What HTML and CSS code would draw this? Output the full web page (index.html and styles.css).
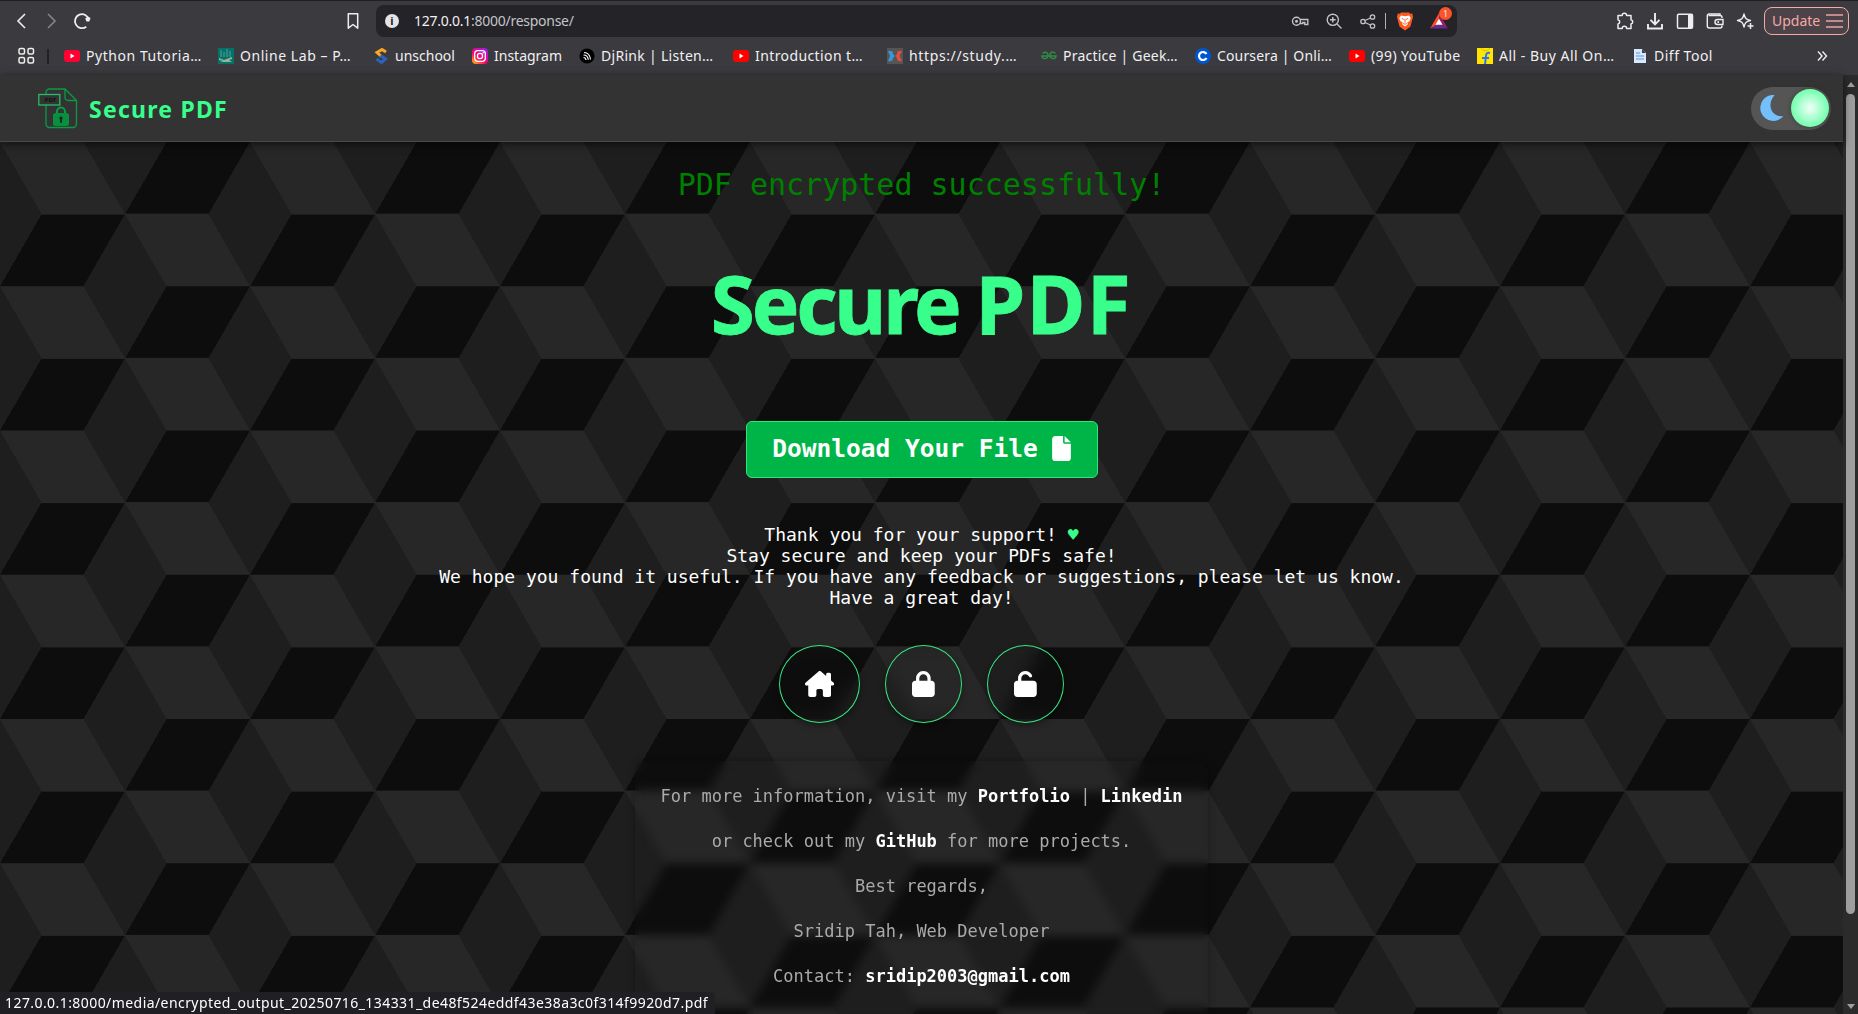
FILE: index.html
```html
<!DOCTYPE html>
<html lang="en">
<head>
<meta charset="utf-8">
<title>Secure PDF</title>
<link rel="stylesheet" href="styles.css">
</head>
<body>
<header class="chrome">
  <div class="toolbar">
    <div class="nav-icons">
      <svg width="46" height="20" viewBox="0 0 46 20"><g fill="none" stroke-width="1.6"><path d="M11 3 4 10 11 17" stroke="#eee"/><path d="M34 3 41 10 34 17" stroke="#858489"/></g></svg>
      <svg width="20" height="20" viewBox="0 0 20 20"><path d="M16.800 8.500A7 7 0 1 0 14.300 15.700" fill="none" stroke="#eee" stroke-width="1.800"/><path d="M13.200 7.500 16 5.500l2.500 1.500-1.200 3.500h-2.800z" fill="#eee"/></svg>
    </div>
    <svg class="bookmark" width="20" height="20" viewBox="0 0 20 20"><path d="M5.300 2.800h9.400v14.400L10 13.500l-4.700 3.700z" fill="none" stroke="#eee" stroke-width="1.500" stroke-linejoin="round"/></svg>
    <div class="address">
      <span class="info">i</span>
      <span class="url">127.0.0.1<span class="path">:8000/response/</span></span>
      <div class="address-icons">
        <svg width="18" height="18" viewBox="0 0 18 18"><g fill="none" stroke="#c4c3c8" stroke-width="1.400"><circle cx="5.500" cy="9.300" r="4"/><path d="M9 7.500h7.800v5h-3V10.500h-2v1H9"/></g><circle cx="5.500" cy="9.300" r="1.500" fill="#c4c3c8"/></svg>
        <svg width="18" height="18" viewBox="0 0 18 18"><g fill="none" stroke="#c4c3c8" stroke-width="1.400"><circle cx="7.800" cy="7.800" r="5.600"/><path d="m12 12 4.500 4.500M5 7.800h5.600M7.800 5v5.600"/></g></svg>
        <svg width="18" height="18" viewBox="0 0 18 18"><g fill="none" stroke="#c4c3c8" stroke-width="1.300"><circle cx="4" cy="9.500" r="2.200"/><circle cx="13.500" cy="5" r="2.200"/><circle cx="13.500" cy="14" r="2.200"/><path d="m6 8.500 5.500-2.500M6 10.500l5.500 2.500"/></g></svg>
        <span class="sep"></span>
        <svg width="18" height="20" viewBox="0 0 18 20"><path d="M5 1.500h8l1.300 1.300 2-.2.700 3.400-.7 2.500-1.800 7L9 19.500 3.500 15.500l-1.800-7L1 6l.700-3.400 2 .2z" fill="#fb5a1e"/><path d="M5 4.500 9 5.200l4-.7 1.800 2.500-1.300 3.300-2.300 1.200L12 13l-3 2.500L6 13l.8-1.500-2.300-1.200L3.200 7z" fill="#fff"/><path d="m5.800 7.500 2 .8M12.200 7.500l-2 .8M9 8v3.500M7.200 12.200 9 13.400l1.800-1.200" fill="none" stroke="#fb5a1e"/></svg>
        <div class="rewards"><svg width="18" height="16" viewBox="0 0 20 18"><path d="M10 0 0 17.500l10-6z" fill="#ff4a2a"/><path d="M10 0v11.500l10 6z" fill="#9e1f63"/><path d="M0 17.500h20l-10-6z" fill="#662d91"/><path d="m10 6.500-4 6.700h8z" fill="#fff"/></svg><span class="badge">1</span></div>
      </div>
    </div>
    <div class="actions">
      <svg width="18" height="20" viewBox="0 0 18 20"><path d="M2 4.500h4.200a2.200 2.200 0 0 1 4.400 0H15v4.200a2.200 2.200 0 0 1 0 4.300v4.500h-4.400a2.200 2.200 0 0 0-4.400 0H2V13a2.200 2.200 0 0 0 0-4.300z" fill="none" stroke="#eee" stroke-width="1.500" stroke-linejoin="round"/></svg>
      <svg width="18" height="20" viewBox="0 0 18 20"><path d="M9 2v11M4.500 8.800 9 13.300l4.500-4.500M2 13v4.500h14V13" fill="none" stroke="#eee" stroke-width="1.900"/></svg>
      <svg width="18" height="20" viewBox="0 0 18 20"><rect x="1.500" y="3.200" width="15" height="14" rx="1.200" fill="none" stroke="#eee" stroke-width="1.500"/><path d="M12 3.500h5v13.500h-5z" fill="#eee"/></svg>
      <svg width="18" height="20" viewBox="0 0 18 20"><g fill="none" stroke="#eee" stroke-width="1.400"><path d="M16 7V6.500a2 2 0 0 0-2-2H2.500"/><path d="M14 4.500V3H3a1.700 1.700 0 0 0-1.700 1.700V15a2 2 0 0 0 2 2H14a2 2 0 0 0 2-2v-.5"/><path d="M17 8.500h-5.500a2.500 2.500 0 0 0 0 5H17z"/></g><circle cx="12.200" cy="11" r="1" fill="#eee"/></svg>
      <svg width="18" height="20" viewBox="0 0 18 20"><path d="M8 3c1 4.500 2 5.500 6.500 6.500C10 10.500 9 11.500 8 16 7 11.500 6 10.500 1.500 9.500 6 8.500 7 7.500 8 3z" fill="none" stroke="#eee" stroke-width="1.400" stroke-linejoin="round"/><path d="M14.500 12v6M11.500 15h6" stroke="#eee" stroke-width="1.500"/></svg>
      <div class="update"><span>Update</span><svg width="17" height="16" viewBox="0 0 17 16"><path d="M0 2h17M0 8h17M0 14h17" stroke="#e9a3a3" stroke-width="1.500"/></svg></div>
    </div>
  </div>
  <nav class="bookmarks">
    <svg class="grid" width="17" height="18" viewBox="0 0 17 18"><g fill="none" stroke="#eee" stroke-width="1.500"><rect x="1" y="1.500" width="5.500" height="5.500" rx="1.500"/><rect x="10" y="1.500" width="5.500" height="5.500" rx="1.500"/><rect x="1" y="10.500" width="5.500" height="5.500" rx="1.500"/><rect x="10" y="10.500" width="5.500" height="5.500" rx="1.500"/></g></svg>
    <span class="divider"></span>
    <div class="links">
      <a class="w1"><svg viewBox="0 0 16 16"><rect y="2" width="16" height="12" rx="3" fill="#ff0033"/><path d="m6.500 5.500 4 2.500-4 2.500z" fill="#fff"/></svg><span>Python Tutoria…</span></a>
      <a class="w2"><svg viewBox="0 0 16 16"><path d="M0 0h16v16H0z" fill="#04716b"/><path d="M3 2v7M6 4v5M9 1v8M12 3v6" stroke="#5aa39a"/><path d="m1 10 5 2 8-3v2l-3 1 3 2H2l3-1-4-1z" fill="#9ab58f"/></svg><span>Online Lab – P…</span></a>
      <a class="w3"><svg viewBox="0 0 16 16"><path d="m13 4-4-2.500L4 4.500l4.500 4" fill="none" stroke="#f9a825" stroke-width="3"/><path d="m7.500 7.500 5 3.500-4 3.500-5-3.500" fill="none" stroke="#2a63b8" stroke-width="3"/></svg><span>unschool</span></a>
      <a class="w4"><svg viewBox="0 0 16 16"><defs><linearGradient id="ig" x1="0" y1="1" x2=".8" y2="0"><stop stop-color="#ffc800"/><stop offset=".45" stop-color="#ff0169"/><stop offset="1" stop-color="#9b1fe8"/></linearGradient></defs><rect width="16" height="16" rx="4" fill="url(#ig)"/><g fill="none" stroke="#fff" stroke-width="1.300"><rect x="2.700" y="2.700" width="10.600" height="10.600" rx="3"/><circle cx="8" cy="8" r="2.600"/></g><circle cx="11.200" cy="4.800" r=".8" fill="#fff"/></svg><span>Instagram</span></a>
      <a class="w5"><svg viewBox="0 0 16 16"><circle cx="8" cy="8" r="7.600" fill="#000"/><path d="M5 4.500c4 0 6 3 6.500 7M4.500 7c3 0 4.500 2 4.800 4.800M4.500 9.500c1.500 0 2.300 1 2.500 2.500" fill="none" stroke="#fff" stroke-width="1.200"/></svg><span>DjRink | Listen…</span></a>
      <a class="w6"><svg viewBox="0 0 16 16"><rect y="2" width="16" height="12" rx="3" fill="#f00"/><path d="m6.500 5.500 4 2.500-4 2.500z" fill="#fff"/></svg><span>Introduction t…</span></a>
      <a class="w7"><svg viewBox="0 0 16 16"><path d="M0 0h16v16H0z" fill="#555"/><path d="M1 3h3q2 0 2 3l2 2-2 2q0 4-5 3l2-5z" fill="#3498db"/><path d="M15 3h-3q-2 0-2 3L8.500 8l1.500 2q0 4 5 3l-2.500-5z" fill="#e74c3c"/></svg><span>https://study.…</span></a>
      <a class="w8"><svg viewBox="0 0 16 16"><g fill="none" stroke="#2f8d46" stroke-width="1.500"><path d="M1.500 5.500C5 3 7.500 5 7 8s-5.500 4-6 0h14c-.5 4-5.500 3-6 0s2-5.500 5.500-2.500"/></g></svg><span>Practice | Geek…</span></a>
      <a class="w9"><svg viewBox="0 0 16 16"><circle cx="8" cy="8" r="8" fill="#0056d2"/><path d="M11.500 10a4 4 0 1 1 0-4" fill="none" stroke="#fff" stroke-width="2.200"/></svg><span>Coursera | Onli…</span></a>
      <a class="w10"><svg viewBox="0 0 16 16"><rect y="2" width="16" height="12" rx="3" fill="#f00"/><path d="m6.500 5.500 4 2.500-4 2.500z" fill="#fff"/></svg><span>(99) YouTube</span></a>
      <a class="w11"><svg viewBox="0 0 16 16"><path d="M0 0h16v16H0z" fill="#ffe500"/><path d="M4 0q4 6 9 0" fill="none" stroke="#e3bd00"/><path d="M13 5q-4-1-4 3l-1 8M5 10h7" fill="none" stroke="#2874f0" stroke-width="2"/></svg><span>All - Buy All On…</span></a>
      <a class="w12"><svg viewBox="0 0 16 16"><path d="M2 1h8l4 4v10H2z" fill="#d7e8ff"/><path d="M10 1v4h4" fill="#345"/><path d="M4 5h4M4 8h8M4 11h8" stroke="#86aee0" stroke-width="1.300"/></svg><span>Diff Tool</span></a>
    </div>
    <svg class="more" width="12" height="12" viewBox="0 0 12 12"><path d="m2 1.500 4 4.500-4 4.500M6.500 1.500l4 4.500-4 4.500" fill="none" stroke="#eee" stroke-width="1.400"/></svg>
  </nav>
</header>
<div class="viewport">
  <div class="page">
    <div class="topbar">
      <div class="brand">
        <svg width="40" height="41" viewBox="0 0 40 41"><g fill="none" stroke="#0a9c45" stroke-width="1.300"><path d="M8 6V4.500a3.500 3.500 0 0 1 3.500-3.500H27l11.500 11.500V36a3.500 3.500 0 0 1-3.500 3.500H11.500A3.500 3.500 0 0 1 8 36V17"/><path d="M27 1v8.500a3 3 0 0 0 3 3h8.500"/><path d="M19 27v-3.500a4 4 0 0 1 8 0V27" stroke-width="2"/></g><rect x="15" y="25" width="16" height="13" rx="2.500" fill="#0a8f40"/><path d="M23 28.500a1.700 1.700 0 0 1 .9 3.100v3.200h-1.800v-3.200a1.700 1.700 0 0 1 .9-3.100z" fill="#222"/><rect x=".8" y="6.500" width="21" height="10.500" fill="#303632" stroke="#2fb86a" stroke-width="1.300"/><text class="logo-text" x="6.500" y="14.200">PDF</text></svg>
        <span>Secure PDF</span>
      </div>
      <div class="toggle">
        <svg width="24" height="28" viewBox="0 0 24 28"><path d="M14.500 1A13 13 0 1 0 23.500 22C14 24 5 13 14.500 1z" fill="#73c0fc"/></svg>
        <span class="knob"></span>
      </div>
    </div>
    <main class="content">
      <p class="message">PDF encrypted successfully!</p>
      <h1><span class="first">Secure</span> <span class="second">PDF</span></h1>
      <a class="download"><span>Download Your File</span><svg width="19" height="25" viewBox="0 0 384 512"><path fill="#fff" d="M0 64C0 28.700 28.700 0 64 0H224V128c0 17.700 14.300 32 32 32H384V448c0 35.300-28.700 64-64 64H64c-35.300 0-64-28.700-64-64V64zm384 64H256V0L384 128z"/></svg></a>
      <p class="thanks">Thank you for your support! <span class="heart">♥</span><br>Stay secure and keep your PDFs safe!<br>We hope you found it useful. If you have any feedback or suggestions, please let us know.<br>Have a great day!</p>
      <div class="circles">
        <a class="circle home"><svg width="29.250" height="26" viewBox="0 0 576 512"><path fill="#fff" d="M543.800 287.600c17 0 32-14 32-32.100c1-9-3-17-11-24L512 185V64c0-17.700-14.300-32-32-32H448c-17.700 0-32 14.300-32 32v36.700L309.500 7c-6-5-14-7-21-7s-15 1-22 8L10 231.500c-7 7-10 15-10 24c0 18 14 32.100 32 32.100h32v184.400c0 22.100 17.900 40 40 40h80c22.100 0 40-17.900 40-40V384c0-17.700 14.300-32 32-32h64c17.700 0 32 14.300 32 32v88c0 22.100 17.900 40 40 40h80c22.100 0 40-17.900 40-40V287.600z"/></svg></a>
        <a class="circle"><svg width="22.750" height="26" viewBox="0 0 448 512"><path fill="#fff" d="M144 144v48H304V144c0-44.200-35.800-80-80-80s-80 35.800-80 80zM80 192V144C80 64.500 144.500 0 224 0s144 64.500 144 144v48h16c35.300 0 64 28.700 64 64V448c0 35.300-28.700 64-64 64H64c-35.300 0-64-28.700-64-64V256c0-35.300 28.700-64 64-64H80z"/></svg></a>
        <a class="circle"><svg width="22.750" height="26" viewBox="0 0 448 512"><path fill="#fff" d="M144 144c0-44.200 35.800-80 80-80c31.900 0 59.400 18.600 72.300 45.700c7.600 16 26.700 22.800 42.600 15.200s22.800-26.700 15.200-42.600C331 33.700 281.500 0 224 0C144.500 0 80 64.500 80 144v48H64c-35.300 0-64 28.700-64 64V448c0 35.300 28.700 64 64 64H384c35.300 0 64-28.700 64-64V256c0-35.300-28.700-64-64-64H144V144z"/></svg></a>
      </div>
      <footer class="card">
        <p>For more information, visit my <b>Portfolio</b> | <b>Linkedin</b></p>
        <p>or check out my <b>GitHub</b> for more projects.</p>
        <p>Best regards,</p>
        <p>Sridip Tah, Web Developer</p>
        <p>Contact: <b>sridip2003@gmail.com</b></p>
      </footer>
    </main>
  </div>
  <div class="scrollbar"><span class="arrow up"></span><span class="thumb"></span><span class="arrow down"></span></div>
  <div class="status"><span>127.0.0.1:8000/media/encrypted_output_20250716_134331_de48f524eddf43e38a3c0f314f9920d7.pdf</span></div>
</div>
</body>
</html>
```
FILE: styles.css
```css
* { box-sizing: border-box; }
body { margin: 0; height: 1014px; overflow: hidden; display: flex; flex-direction: column; background: #1e1e1e; font-family: "Noto Sans", sans-serif; color: #fff; }
p, h1 { margin: 0; }
svg { display: block; flex: none; }

.chrome { height: 75px; flex: none; background: #3b3a3f; border-top: 1px solid #202024; font-size: 14px; color: #f0f0f2; }
.toolbar { height: 40px; display: flex; align-items: center; padding-left: 14px; }
.nav-icons { display: flex; gap: 12px; width: 329px; }
.address { width: 1081px; height: 32px; margin-left: 13px; border-radius: 8px; background: #242328; display: flex; align-items: center; padding: 0 8px 0 9px; }
.info { width: 14px; height: 14px; border-radius: 50%; background: #e4e4e8; color: #242328; font-size: 11px; font-weight: 700; line-height: 14px; text-align: center; }
.url { margin-left: 15px; padding-bottom: 2px; letter-spacing: -0.260px; }
.path { color: #c3c3c8; }
.address-icons { margin-left: auto; display: flex; align-items: center; gap: 16px; }
.sep { width: 1px; height: 16px; background: #b0b0b5; margin: 0 -6px 0 -8px; }
.rewards { position: relative; margin-right: 1px; }
.badge { position: absolute; left: 9px; top: -6px; width: 13px; height: 13px; border-radius: 50%; background: #fb542b; font-size: 9px; line-height: 13px; text-align: center; }
.actions { margin-left: auto; display: flex; align-items: center; gap: 12px; padding-right: 9px; }
.update { width: 85px; height: 28px; margin-left: -2px; border: 1.500px solid #f5a9a9; border-radius: 8px; background: #4b4347; color: #f5a9a9; display: flex; align-items: center; justify-content: space-between; padding: 0 5px 0 7px; }
.update span { padding-bottom: 2px; }

.bookmarks { height: 34px; display: flex; align-items: center; padding: 0 30px 4px 18px; }
.divider { width: 2px; height: 15px; background: #222226; margin: 0 15px 0 12px; }
.links { display: flex; flex: 1; min-width: 0; }
.links a { display: flex; align-items: center; gap: 6px; flex: none; white-space: nowrap; }
.links span { padding-bottom: 2px; }
.links svg { width: 16px; height: 16px; }
.w1 { width: 154px; letter-spacing: .55px; }
.w2 { width: 155px; letter-spacing: .55px; }
.w3 { width: 99px; }
.w4 { width: 107px; }
.w5 { width: 154px; letter-spacing: .3px; }
.w6 { width: 154px; letter-spacing: .4px; }
.w7 { width: 154px; letter-spacing: .63px; }
.w8 { width: 154px; letter-spacing: .22px; }
.w9 { width: 154px; letter-spacing: .15px; }
.w10 { width: 128px; letter-spacing: .4px; }
.w11 { width: 155px; letter-spacing: .5px; }
.w12 { width: 100px; letter-spacing: .5px; }

.viewport { flex: 1; min-height: 0; display: flex; position: relative; }
.page { flex: 1; display: flex; flex-direction: column; min-width: 0; }
.topbar { height: 67px; flex: none; background: #333; border-bottom: 1px solid #4a4a4a; box-shadow: 0 2px 8px rgba(0, 0, 0, .6); display: flex; align-items: center; justify-content: space-between; padding: 0 12px 0 38px; z-index: 1; }
.brand { display: flex; align-items: center; gap: 11px; color: #38ff8b; font-size: 23px; font-weight: 700; letter-spacing: 1.250px; }
.brand span { padding-top: 2px; }
.logo-text { font: 700 6px "Noto Sans", sans-serif; letter-spacing: .2px; fill: #111; }
.toggle { width: 80px; height: 43px; border-radius: 22px; background: #555; display: flex; align-items: center; justify-content: space-between; padding: 0 2px 0 9px; }
.knob { width: 38px; height: 38px; border-radius: 50%; background: radial-gradient(circle, #f2fff7 0, #73ffae 70%); box-shadow: 0 0 5px rgba(0, 0, 0, .3); }

.content {
  --s: 250px; --dark: #0d0d0d; --light: #272727; --mid: #1e1e1e;
  flex: 1; min-height: 0; display: flex; flex-direction: column; align-items: center;
  background:
    repeating-conic-gradient(from 30deg, #0000 0 120deg, var(--mid) 0 180deg) calc(.5 * var(--s)) calc(.5 * var(--s) * .577),
    repeating-conic-gradient(from 30deg, var(--dark) 0 60deg, var(--light) 0 120deg, var(--mid) 0 180deg);
  background-size: var(--s) calc(var(--s) * .577);
  font-family: "DejaVu Sans Mono", monospace;
}
.message { margin-top: 25px; font-size: 30px; line-height: 36px; color: #008000; }
h1 { margin-top: 45px; font: 700 80px/110px "Noto Sans", sans-serif; color: #38ff8b; -webkit-text-stroke: .8px #38ff8b; word-spacing: -4px; }
.first { letter-spacing: -3.200px; }
.second { letter-spacing: 1.500px; }
.download { margin-top: 63px; width: 352px; height: 57px; flex: none; display: flex; align-items: center; justify-content: center; gap: 14px; border: 1.500px solid #2bea78; border-radius: 6px; background: #00b548; font-size: 24.500px; font-weight: 700; }
.download span { padding-bottom: 2px; }
.download svg { margin-bottom: 3px; }
.thanks { margin-top: 46px; font-size: 18px; line-height: 21px; text-align: center; }
.heart { color: #38ff8b; }
.circles { margin-top: 37px; display: flex; gap: 25px; }
.circle { width: 77px; height: 78px; border: 1.500px solid #35e57f; border-radius: 50%; display: flex; align-items: center; justify-content: center; backdrop-filter: blur(8px); box-shadow: 0 3px 6px rgba(0, 0, 0, .35); }
.home { width: 81px; }
.card { margin-top: 38px; width: 573px; flex: 1; min-height: 0; padding-top: 13px; border-radius: 10px 10px 0 0; backdrop-filter: blur(5px); box-shadow: 0 0 8px rgba(0, 0, 0, .3); text-align: center; font-size: 17px; line-height: 45px; color: #aaa; }
.card b { color: #fff; }

.scrollbar { width: 15px; background: #2b2b2b; display: flex; flex-direction: column; align-items: center; padding: 7px 0 5px; }
.arrow { border: 4px solid transparent; }
.up { border-bottom: 5px solid #9e9e9e; border-top: 0; }
.down { border-top: 5px solid #9e9e9e; border-bottom: 0; margin-top: auto; }
.thumb { width: 9px; height: 820px; margin-top: 7px; border-radius: 4.500px; background: #9e9e9e; }
.status { position: absolute; left: 0; bottom: 0; width: 715px; height: 22px; padding-left: 5px; background: #202024; border-top-right-radius: 4px; font-size: 14px; line-height: 21px; letter-spacing: .430px; white-space: nowrap; z-index: 2; }
```
